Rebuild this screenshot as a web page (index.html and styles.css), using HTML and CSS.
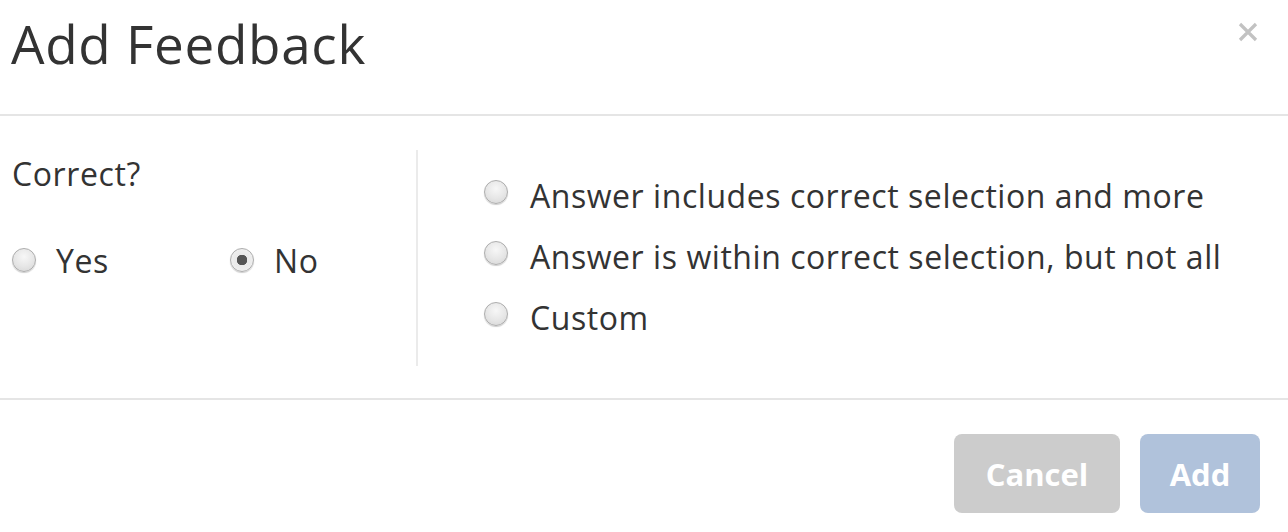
FILE: index.html
```html
<!DOCTYPE html>
<html lang="en">
<head>
<meta charset="utf-8">
<title>Add Feedback</title>
<link rel="stylesheet" href="styles.css">
</head>
<body>
<div class="modal">
  <div class="modal-header">
    <h1 class="modal-title">Add Feedback</h1>
    <button class="close" aria-label="Close">
      <svg width="20" height="20" viewBox="0 0 20 20"><path d="M2 2 L18 18 M18 2 L2 18" stroke="#c2c2c2" stroke-width="3.2" fill="none"/></svg>
    </button>
  </div>
  <div class="modal-body">
    <div class="col-left">
      <div class="label">Correct?</div>
      <div class="choice-row">
        <label class="option option-wide"><span class="radio"></span><span class="text">Yes</span></label>
        <label class="option"><span class="radio checked"></span><span class="text">No</span></label>
      </div>
    </div>
    <div class="col-right">
      <label class="option row"><span class="radio up"></span><span class="text">Answer includes correct selection and more</span></label>
      <label class="option row"><span class="radio up"></span><span class="text">Answer is within correct selection, but not all</span></label>
      <label class="option row"><span class="radio up"></span><span class="text">Custom</span></label>
    </div>
  </div>
  <div class="modal-footer">
    <button class="btn btn-cancel">Cancel</button>
    <button class="btn btn-add">Add</button>
  </div>
</div>
</body>
</html>
```
FILE: styles.css
```css
* { box-sizing: border-box; }
html, body { margin: 0; padding: 0; background: #fff; }
body {
  font-family: "Open Sans", "DejaVu Sans", sans-serif;
  color: #333;
  width: 1288px;
  height: 532px;
  overflow: hidden;
}
.modal { width: 1288px; }

.modal-header {
  position: relative;
  height: 116px;
  border-bottom: 2px solid #e5e5e5;
  padding: 8px 0 0 11px;
}
.modal-title {
  margin: 0;
  font-size: 53px;
  line-height: 72px;
  font-weight: 400;
  letter-spacing: 0.7px;
  color: #333;
}
.close {
  position: absolute;
  top: 22px;
  right: 30px;
  width: 20px;
  height: 20px;
  padding: 0;
  border: 0;
  background: none;
}
.close svg { display: block; }

.modal-body {
  display: flex;
  padding: 34px 0 32px;
  height: 282px;
}
.col-left {
  width: 418px;
  padding-left: 12px;
  border-right: 2px solid #ebebeb;
}
.label {
  margin-top: 2px;
  font-size: 32px;
  line-height: 44px;
  letter-spacing: 0.6px;
}
.choice-row {
  display: flex;
  margin-top: 43px;
}
.option {
  display: flex;
  align-items: center;
  font-size: 32px;
  line-height: 44px;
  letter-spacing: 0.55px;
}
.option-wide { width: 218px; }
.radio {
  flex: none;
  width: 24px;
  height: 24px;
  border-radius: 50%;
  border: 1px solid #adadad;
  background: radial-gradient(circle at 50% 35%, #f7f7f7 0%, #e6e6e6 55%, #d4d4d4 100%);
  box-shadow: 0 1px 1px rgba(0,0,0,0.2);
  margin-right: 20px;
  margin-top: -2px;
}
.radio.checked {
  background: radial-gradient(circle, #555 0, #555 5px, #e9e9e9 5.5px, #f2f2f2 100%);
}
.radio.up { margin-top: -8px; margin-right: 22px; }

.col-right {
  padding-left: 66px;
  padding-top: 24px;
  display: flex;
  flex-direction: column;
  gap: 17px;
}

.modal-footer {
  border-top: 2px solid #e5e5e5;
  display: flex;
  justify-content: flex-end;
  gap: 20px;
  padding: 34px 28px 0 0;
}
.btn {
  height: 79px;
  border: 0;
  border-radius: 8px;
  color: #fff;
  font-family: "Open Sans", "DejaVu Sans", sans-serif;
  font-weight: 700;
  font-size: 31px;
  padding: 0;
}
.btn-cancel { width: 166px; background: #cccccc; }
.btn-add { width: 120px; background: #b0c2db; }
```
